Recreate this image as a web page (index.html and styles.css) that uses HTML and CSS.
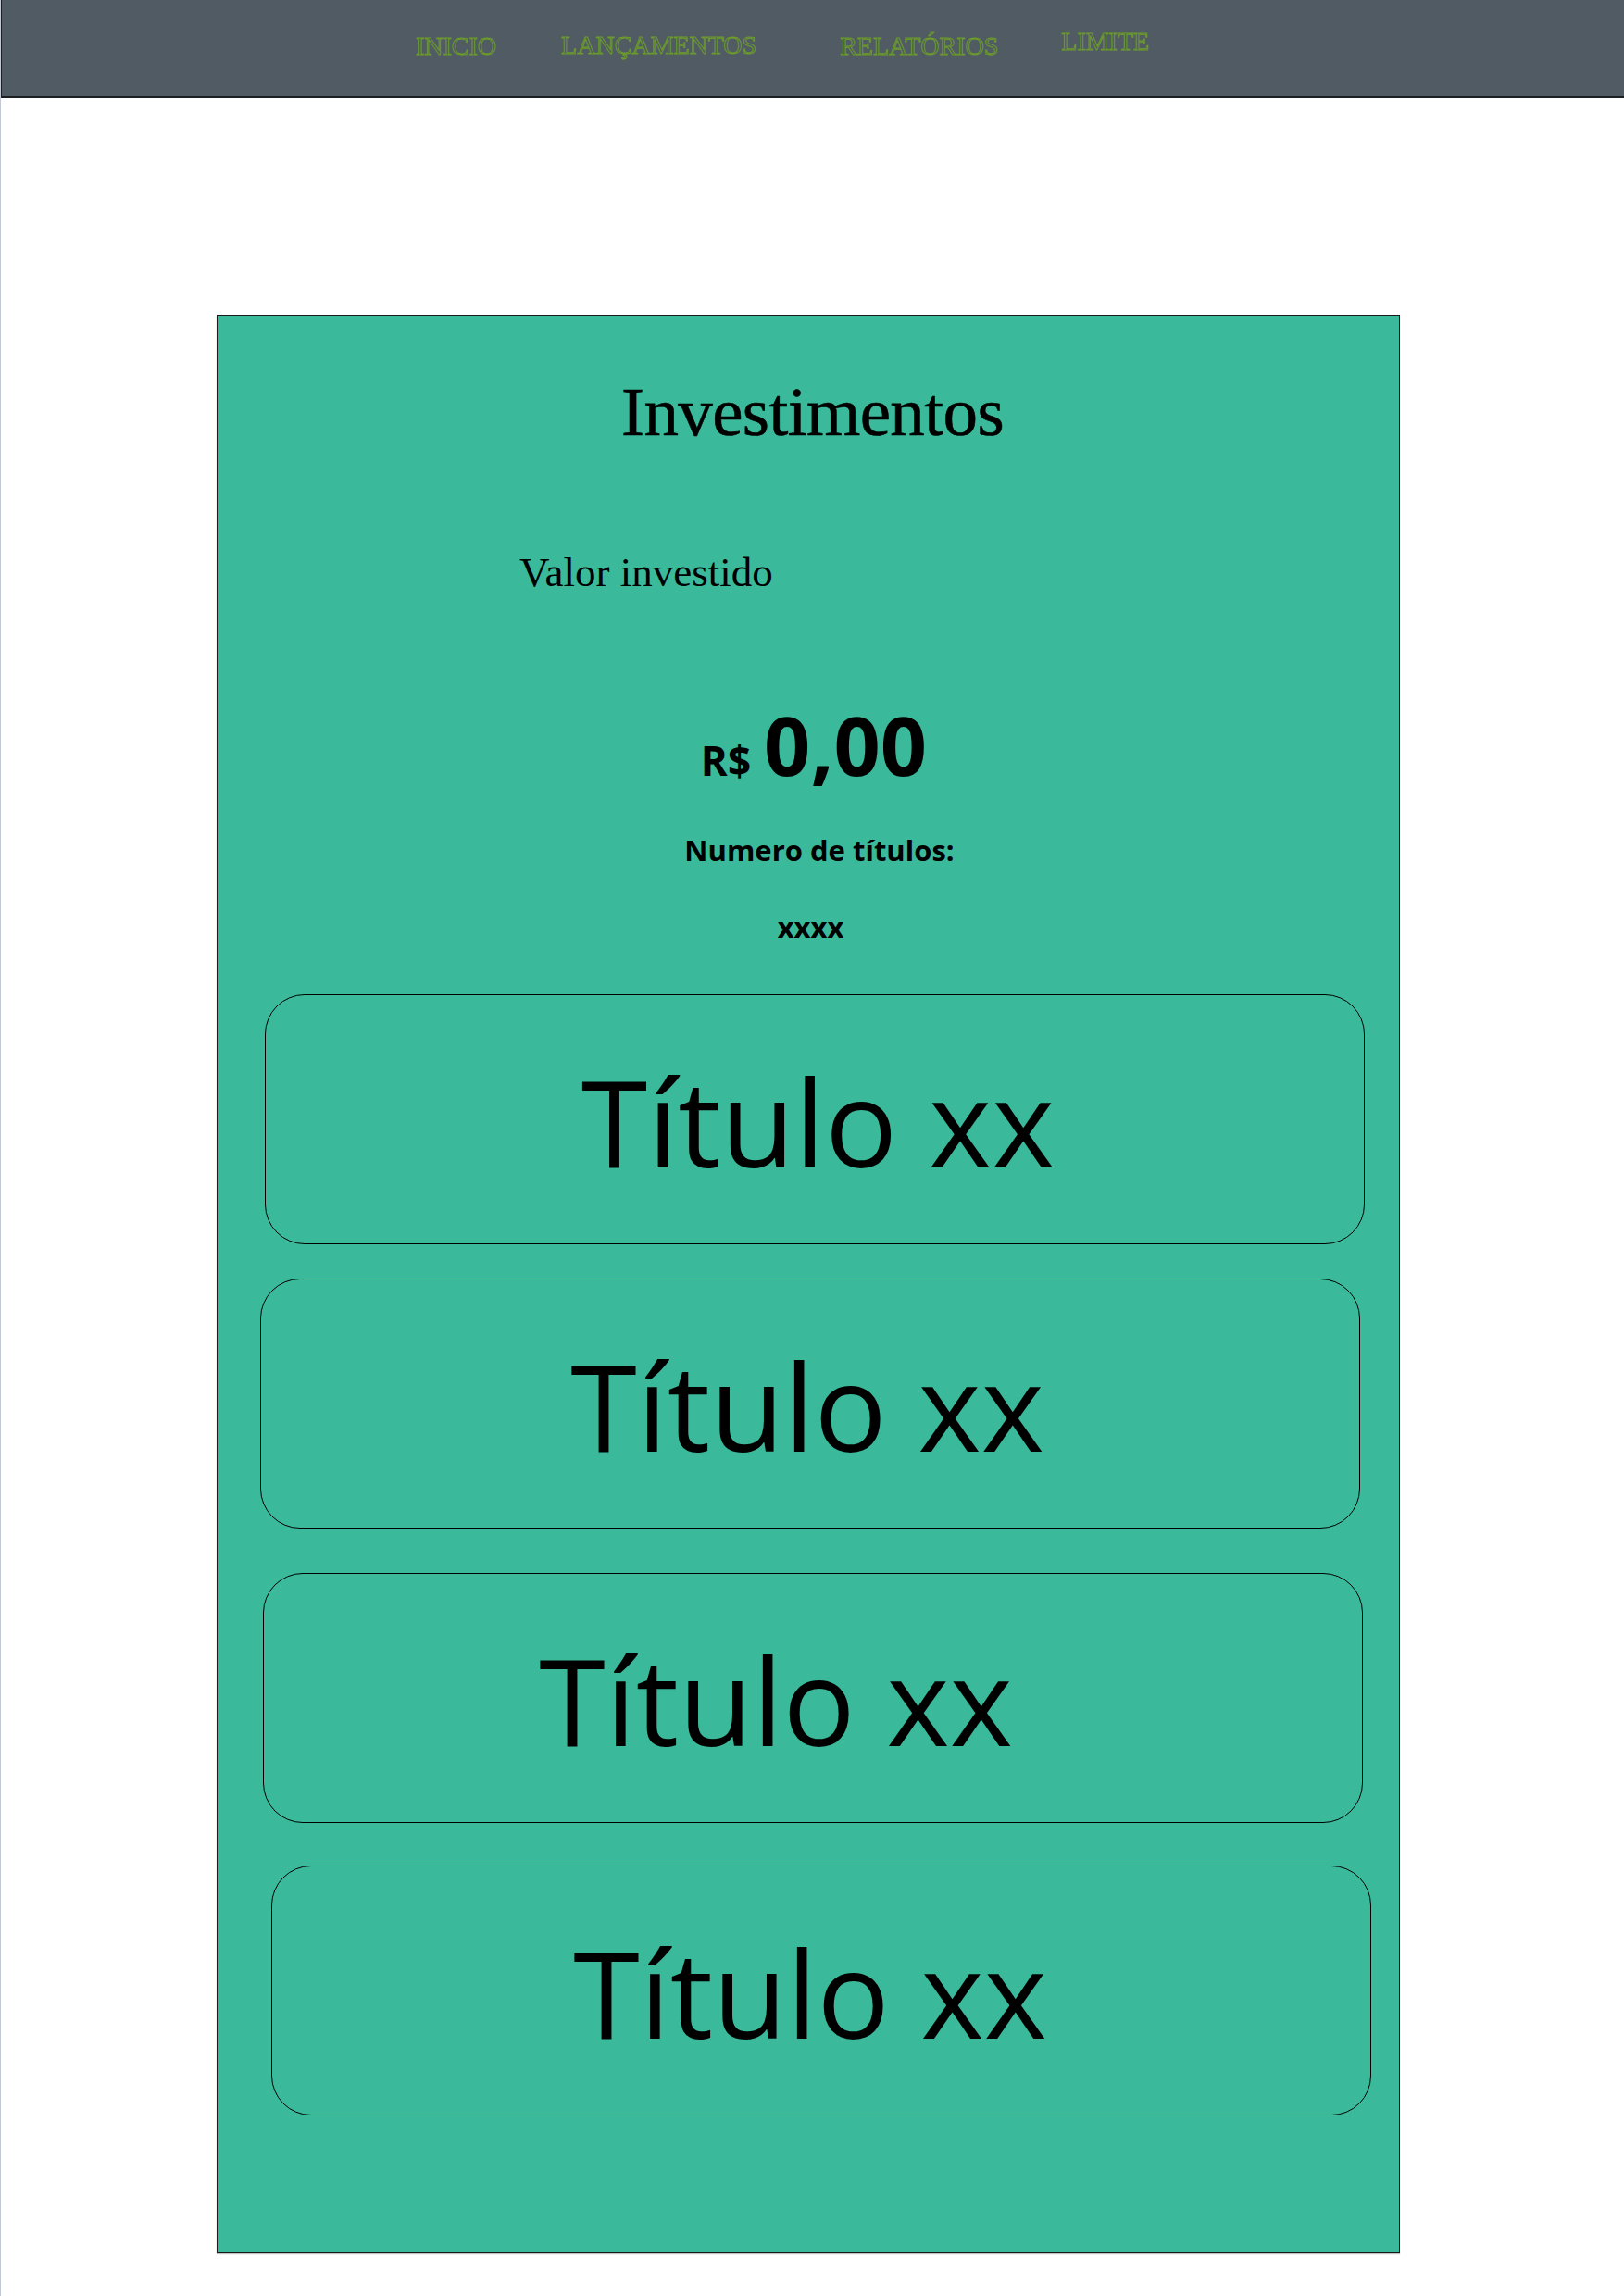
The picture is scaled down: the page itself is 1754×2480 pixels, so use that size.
FILE: index.html
```html
<!DOCTYPE html>
<html lang="pt-BR">
<head>
  <meta charset="UTF-8" />
  <meta name="viewport" content="width=device-width, initial-scale=1.0"/>
  <title>Investimentos</title>
  <link rel="stylesheet" href="styles.css">
</head>
<body>

<header class="topbar">
  <nav class="menu">
    <a class="menu-item item-inicio" href="#">INICIO</a>
    <a class="menu-item item-lanc" href="#">LANÇAMENTOS</a>
    <a class="menu-item item-rel" href="#">RELATÓRIOS</a>
    <a class="menu-item item-limite" href="#">LIMITE</a>
  </nav>
</header>

<main class="painel">
  <h1 class="painel-titulo">Investimentos</h1>
  <p class="valor-label">Valor investido</p>

  <div class="valor">
    <span class="moeda">R$</span>
    <span class="quantia">0,00</span>
  </div>

  <p class="num-titulos">Numero de títulos:</p>
  <p class="num-valor">xxxx</p>

  <div class="titulo-card card-1"><span class="titulo-nome">Título xx</span></div>
  <div class="titulo-card card-2"><span class="titulo-nome">Título xx</span></div>
  <div class="titulo-card card-3"><span class="titulo-nome">Título xx</span></div>
  <div class="titulo-card card-4"><span class="titulo-nome">Título xx</span></div>
</main>

</body>
</html>
```

FILE: styles.css
```css
body {
  margin: 0;
  background-color: #ffffff;
  border-left: 1px solid #c3c8d2;
  min-height: 2480px;
  box-sizing: border-box;
  font-family: "Open Sans", "Liberation Sans", sans-serif;
}
.topbar {
  background-color: #505b63;
  height: 106px;
  box-sizing: border-box;
  border-bottom: 2px solid #1c1f22;
  border-left: 1px solid #1c1f22;
}
.menu {
  display: flex;
  align-items: flex-start;
  padding: 34px 0 0 447px;
}
.menu-item {
  font-family: "Liberation Serif", serif;
  font-size: 28px;
  line-height: 32px;
  color: transparent;
  -webkit-text-stroke: 1px #6c9c2a;
  text-decoration: none;
}
.item-inicio { margin-right: 70px; }
.item-lanc { margin-right: 90px; margin-top: -1px; }
.item-rel { margin-right: 68px; }
.item-limite { margin-top: -5px; }

.painel {
  margin: 234px 0 0 233px;
  width: 1278px;
  box-sizing: border-box;
  background-color: #3aba9b;
  border: 1px solid #1a1a1a;
  border-bottom-width: 2px;
  box-shadow: 0 1px 1px rgba(0,0,0,0.25);
  padding: 64px 0 147px 0;
}
.painel-titulo {
  margin: 0;
  padding-left: 9px;
  text-align: center;
  font-family: "Liberation Serif", serif;
  font-weight: normal;
  font-size: 75px;
  line-height: 80px;
  letter-spacing: -0.6px;
  color: #000;
  -webkit-text-stroke: 0.6px #000;
}
.valor-label {
  margin: 108px 0 0 326px;
  font-family: "Liberation Serif", serif;
  font-size: 45px;
  line-height: 50px;
  color: #000;
}
.valor {
  margin-top: 111px;
  padding-left: 12px;
  display: flex;
  justify-content: center;
  align-items: baseline;
  gap: 14px;
  font-weight: 700;
  color: #000;
}
.moeda {
  font-size: 44px;
  line-height: 1;
}
.quantia {
  font-size: 88px;
  line-height: 100px;
}
.num-titulos {
  margin: 44px 0 0 0;
  padding-left: 24px;
  text-align: center;
  font-weight: 700;
  font-size: 31px;
  line-height: 40px;
}
.num-valor {
  margin: 45px 0 0 0;
  padding-left: 5px;
  text-align: center;
  font-weight: 700;
  font-size: 31px;
  line-height: 36px;
}

.titulo-card {
  width: 1188px;
  height: 270px;
  box-sizing: border-box;
  border: 1px solid #000;
  border-radius: 43px;
  padding-top: 66px;
  text-align: center;
}
.titulo-nome {
  font-size: 130px;
  line-height: 140px;
  color: #000;
}
.card-1 { margin: 55px 0 0 51px; padding-left: 7px; }
.card-2 { margin: 37px 0 0 46px; padding-right: 6px; }
.card-3 { margin: 48px 0 0 49px; padding-right: 80px; }
.card-4 { margin: 46px 0 0 58px; padding-right: 24px; }
```
